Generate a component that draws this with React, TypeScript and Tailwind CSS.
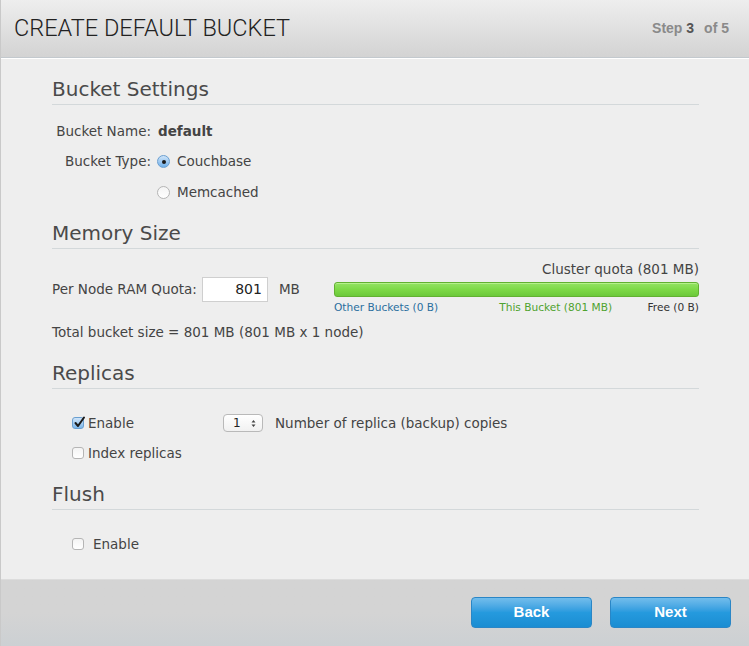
import React from "react";

function Radio({ checked }: { checked?: boolean }) {
  return checked ? (
    <span className="relative inline-flex h-[13px] w-[13px] items-center justify-center rounded-full border border-[#6a9fd0] bg-gradient-to-b from-[#cfe4f8] to-[#6fb0ea]">
      <span className="h-[4px] w-[4px] rounded-full bg-[#1a1a1a]" />
    </span>
  ) : (
    <span className="inline-block h-[13px] w-[13px] rounded-full border border-[#b5b5b5] bg-gradient-to-b from-[#f4f4f4] to-[#ffffff]" />
  );
}

function Checkbox({ checked }: { checked?: boolean }) {
  return checked ? (
    <span className="relative inline-flex h-[12px] w-[12px] items-center justify-center rounded-[3px] border border-[#6a9fd0] bg-gradient-to-b from-[#cfe4f8] to-[#7db8ec]">
      <svg width="13" height="13" viewBox="0 0 13 13" className="absolute -top-[2px] left-[0px]">
        <path d="M2.5 7 L5 10 L11 1.5" fill="none" stroke="#1a1a1a" strokeWidth="2" strokeLinecap="round" strokeLinejoin="round" />
      </svg>
    </span>
  ) : (
    <span className="inline-block h-[12px] w-[12px] rounded-[3px] border border-[#b5b5b5] bg-gradient-to-b from-[#f4f4f4] to-[#ffffff]" />
  );
}

function Heading({ children, mt }: { children: React.ReactNode; mt: string }) {
  return (
    <div className={`${mt} border-b border-[#d3d8da] pb-[3px] text-[20px] leading-[24px] text-[#4a4a4a]`}>
      {children}
    </div>
  );
}

export default function App() {
  return (
    <div
      className="flex h-[646px] w-[749px] flex-col overflow-hidden border-l border-[#c9c9c9] bg-[#eeeeee] text-[13.5px] text-[#444]"
      style={{ fontFamily: '"DejaVu Sans", Verdana, sans-serif' }}
    >
      <header className="flex h-[58px] shrink-0 items-center justify-between border-b border-[#c3c9ce] bg-gradient-to-b from-[#eeeeee] to-[#d3d3d3] pl-[13px] pr-[20px] shadow-[0_1px_0_#ffffff]">
        <h1
          className="text-[23.5px] font-light text-[#222]"
          style={{ fontFamily: 'Roboto, "Liberation Sans", sans-serif' }}
        >
          CREATE DEFAULT BUCKET
        </h1>
        <div
          className="text-[14px] font-bold text-[#8a8a8a]"
          style={{ fontFamily: '"Liberation Sans", Arial, sans-serif' }}
        >
          Step <span className="text-[#555]">3</span>
          <span className="ml-[10px]">of 5</span>
        </div>
      </header>

      <main className="flex-1 pl-[51px] pr-[50px]">
        <Heading mt="mt-[19px]">Bucket Settings</Heading>

        <div className="mt-[11px] flex h-[30px] items-center">
          <div className="w-[99px] whitespace-nowrap text-right">Bucket Name:</div>
          <div className="ml-[7px] font-bold">default</div>
        </div>
        <div className="flex h-[31px] items-center">
          <div className="w-[99px] whitespace-nowrap text-right">Bucket Type:</div>
          <div className="ml-[6px] flex items-center gap-[7px]">
            <Radio checked />
            <span>Couchbase</span>
          </div>
        </div>
        <div className="flex h-[30px] items-center">
          <div className="w-[99px]" />
          <div className="ml-[6px] flex items-center gap-[7px]">
            <Radio />
            <span>Memcached</span>
          </div>
        </div>

        <Heading mt="mt-[14px]">Memory Size</Heading>

        <div className="mt-[12px] flex">
          <div className="mt-[16px] flex h-[25px] items-center self-start">
            <span className="whitespace-nowrap">Per Node RAM Quota:</span>
            <div className="ml-[5px] flex h-[25px] w-[66px] items-center justify-end border border-[#cfcfcf] bg-white pr-[5px] text-[14px] text-[#222]">
              801
            </div>
            <span className="ml-[11px]">MB</span>
          </div>
          <div className="ml-auto flex w-[365px] flex-col">
            <div className="text-right leading-[16px]">Cluster quota (801 MB)</div>
            <div className="mt-[5px] h-[15px] rounded-[3px] border border-[#62b131] bg-gradient-to-b from-[#94e363] via-[#7dd946] to-[#6cc93a] shadow-[inset_0_1px_0_#b5f08c]" />
            <div className="mt-[4px] flex items-center text-[10.6px] leading-[13px]">
              <span className="text-[#2b6e9e]">Other Buckets (0 B)</span>
              <span className="ml-[61px] text-[#4ea22e]">This Bucket (801 MB)</span>
              <span className="ml-auto text-[#333]">Free (0 B)</span>
            </div>
          </div>
        </div>

        <div className="mt-[9px] leading-[18px]">Total bucket size = 801 MB (801 MB x 1 node)</div>

        <Heading mt="mt-[20px]">Replicas</Heading>

        <div className="mt-[19px] flex h-[30px] items-center">
          <div className="ml-[20px] flex w-[151px] items-center gap-[4px]">
            <Checkbox checked />
            <span>Enable</span>
          </div>
          <div className="flex h-[18px] w-[40px] items-center justify-between rounded-[4px] border border-[#b9b9b9] bg-gradient-to-b from-white to-[#f1f1f1] pl-[9px] pr-[6px] text-[12px] text-[#222]">
            <span>1</span>
            <svg width="5" height="9" viewBox="0 0 5 9">
              <path d="M0.5 3.5 L2.5 1 L4.5 3.5 Z M0.5 5.5 L2.5 8 L4.5 5.5 Z" fill="#444" />
            </svg>
          </div>
          <span className="ml-[12px]">Number of replica (backup) copies</span>
        </div>
        <div className="flex h-[30px] items-center">
          <div className="ml-[20px] flex items-center gap-[4px]">
            <Checkbox />
            <span>Index replicas</span>
          </div>
        </div>

        <Heading mt="mt-[14px]">Flush</Heading>

        <div className="mt-[19px] flex h-[30px] items-center">
          <div className="ml-[20px] flex items-center gap-[9px]">
            <Checkbox />
            <span>Enable</span>
          </div>
        </div>
      </main>

      <footer
        className="flex h-[67px] shrink-0 items-start justify-end gap-[18px] border-t border-[#dcdcdc] bg-gradient-to-b from-[#d4d4d4] via-[#d4d4d4] to-[#ccd0d3] pr-[18px] pt-[17px]"
        style={{ fontFamily: '"Liberation Sans", Arial, sans-serif' }}
      >
        <button className="flex h-[31px] w-[121px] items-center justify-center rounded-[4px] border border-[#2a86c6] bg-gradient-to-b from-[#72bdec] via-[#259ade] to-[#1a8dd2] text-[15px] font-bold text-white">
          Back
        </button>
        <button className="flex h-[31px] w-[121px] items-center justify-center rounded-[4px] border border-[#2a86c6] bg-gradient-to-b from-[#72bdec] via-[#259ade] to-[#1a8dd2] text-[15px] font-bold text-white">
          Next
        </button>
      </footer>
    </div>
  );
}
